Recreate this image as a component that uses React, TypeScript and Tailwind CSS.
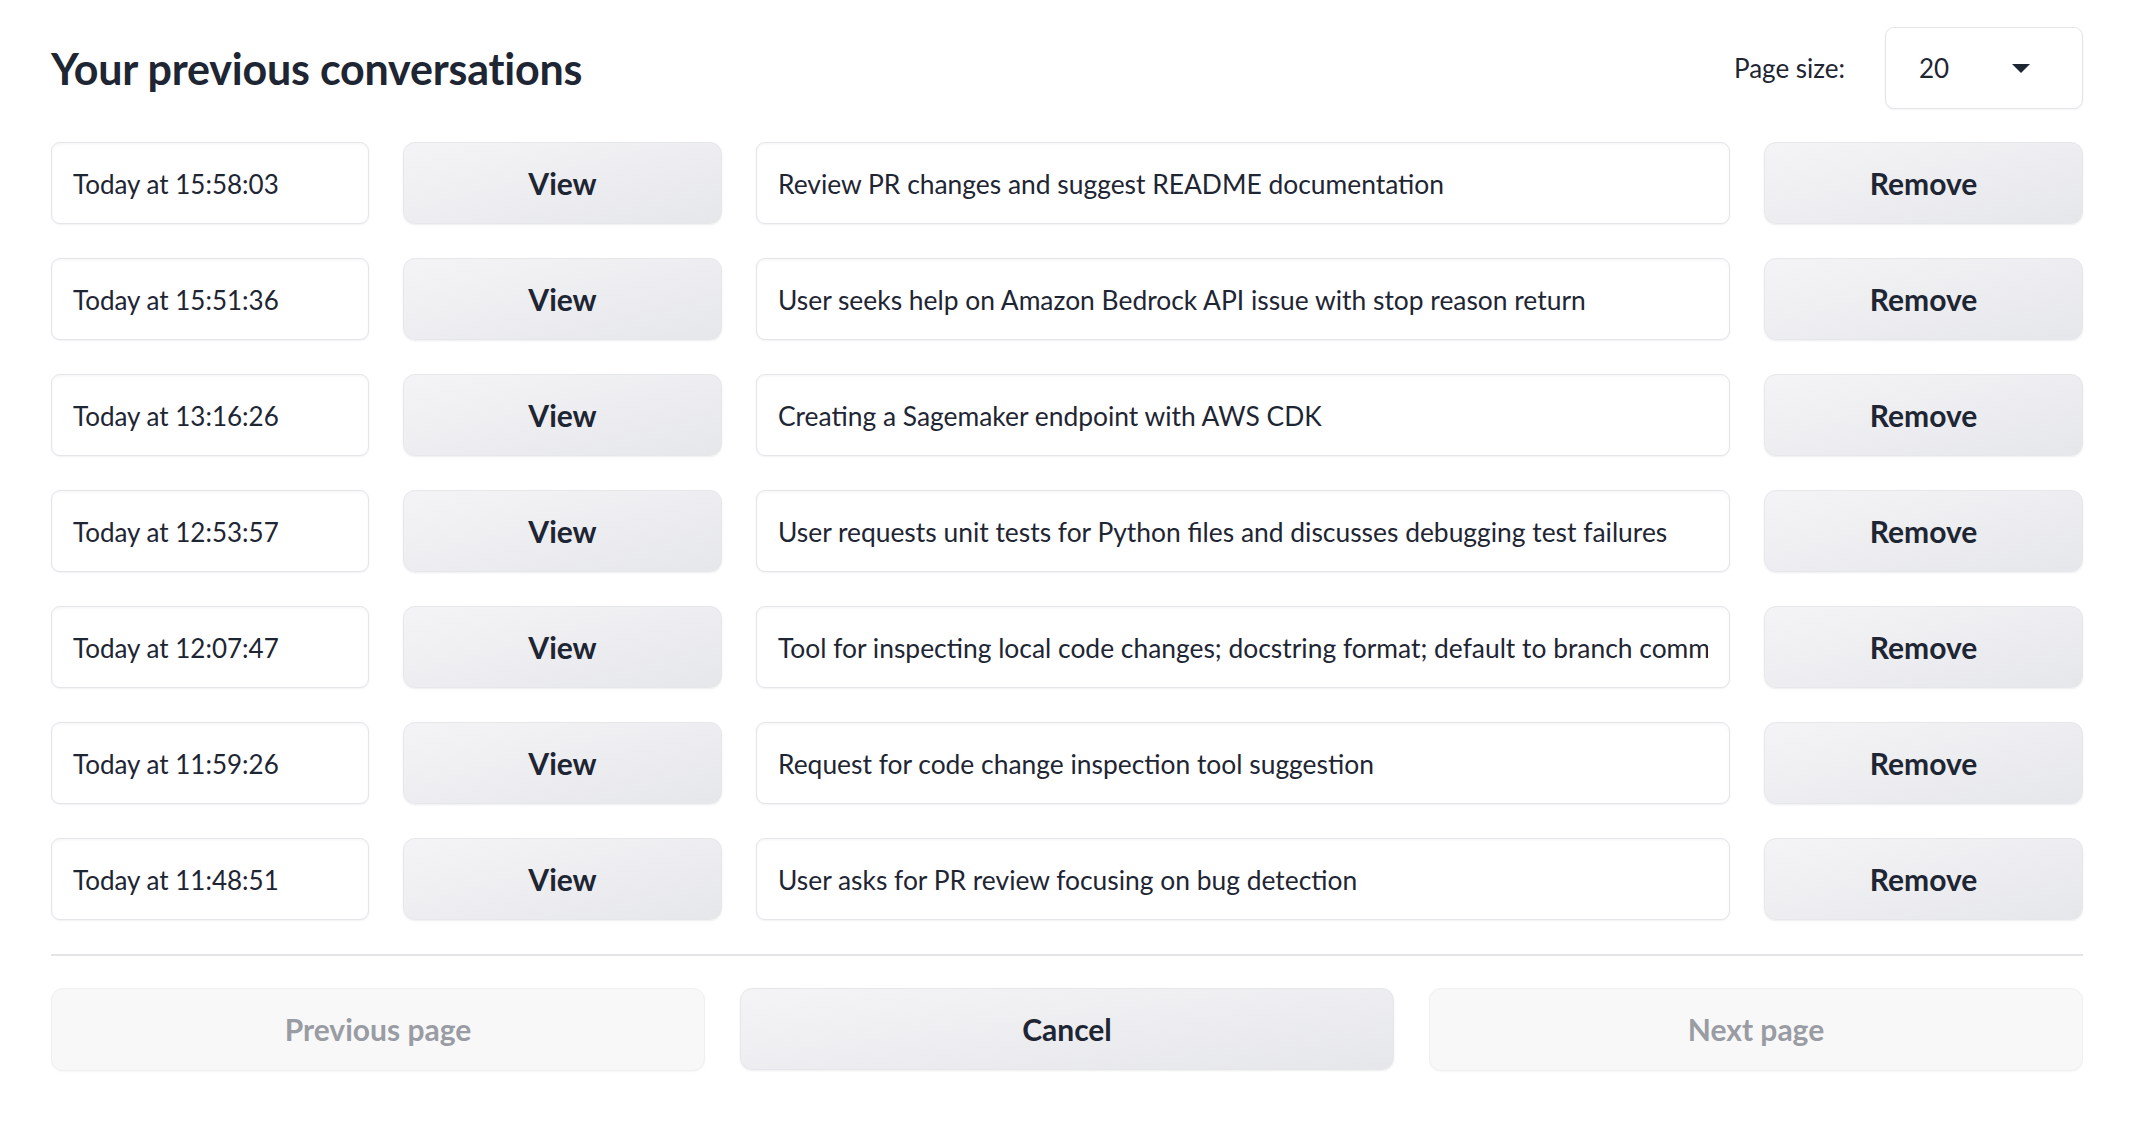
import React from "react";

const rows = [
  { time: "Today at 15:58:03", title: "Review PR changes and suggest README documentation" },
  { time: "Today at 15:51:36", title: "User seeks help on Amazon Bedrock API issue with stop reason return" },
  { time: "Today at 13:16:26", title: "Creating a Sagemaker endpoint with AWS CDK" },
  { time: "Today at 12:53:57", title: "User requests unit tests for Python files and discusses debugging test failures" },
  { time: "Today at 12:07:47", title: "Tool for inspecting local code changes; docstring format; default to branch commit comparison" },
  { time: "Today at 11:59:26", title: "Request for code change inspection tool suggestion" },
  { time: "Today at 11:48:51", title: "User asks for PR review focusing on bug detection" },
];

const font = { fontFamily: '"Lato", "Liberation Sans", sans-serif' };

function Field({ children, wide }: { children: React.ReactNode; wide?: boolean }) {
  return (
    <div className="min-w-0 h-[82px] rounded-[9px] border border-[#e4e5ea] bg-white px-[21px] flex items-center shadow-[0_1px_2px_rgba(16,24,40,0.06),inset_0_2px_3px_rgba(16,24,40,0.03)]">
      <div
        className={
          wide
            ? "min-w-0 w-full overflow-hidden whitespace-nowrap text-[26.4px] text-[#1e2533] leading-[34px] pt-[2px]"
            : "min-w-0 w-full overflow-hidden whitespace-nowrap text-[26px] text-[#1e2533] leading-[34px] pt-[2px]"
        }
      >
        {children}
      </div>
    </div>
  );
}

function Btn({ children }: { children: React.ReactNode }) {
  return (
    <button className="h-[82px] w-full rounded-[12px] border border-[#e6e7eb] bg-gradient-to-br from-[#f4f4f6] to-[#e6e7eb] shadow-[0_1px_2px_rgba(16,24,40,0.08)] text-[30px] font-bold text-[#1e2533] flex items-center justify-center">
      {children}
    </button>
  );
}

export default function App() {
  return (
    <div className="w-[2140px] h-[1136px] bg-white" style={font}>
      <div className="ml-[51px] w-[2032px] pt-[27px]">
        <div className="flex items-center justify-between h-[82px]">
          <h1 className="text-[43px] font-bold text-[#1e2533] leading-none tracking-[-0.2px]">Your previous conversations</h1>
          <div className="flex items-center gap-[40px]">
            <span className="text-[26px] text-[#1e2533]">Page size:</span>
            <div className="w-[198px] h-[82px] rounded-[9px] border border-[#e4e5ea] bg-white flex items-center justify-between pl-[33px] pr-[52px] shadow-[0_1px_2px_rgba(16,24,40,0.05)]">
              <span className="text-[26px] text-[#1e2533]">20</span>
              <svg width="18" height="9" viewBox="0 0 18 9">
                <path d="M0 0 L18 0 L9 9 Z" fill="#1e2533" />
              </svg>
            </div>
          </div>
        </div>

        <div className="mt-[33px] flex flex-col gap-[34px]">
          {rows.map((r) => (
            <div key={r.time} className="grid grid-cols-[318px_319px_minmax(0,1fr)_319px] gap-x-[34px] items-center">
              <Field>{r.time}</Field>
              <Btn>View</Btn>
              <Field wide>{r.title}</Field>
              <Btn>Remove</Btn>
            </div>
          ))}
        </div>

        <div className="mt-[34px] h-[2px] bg-[#e3e4e8]" />

        <div className="mt-[32px] grid grid-cols-3 gap-x-[35px]">
          <button className="h-[83px] rounded-[12px] border border-[#f0f0f2] bg-[#f8f8f9] text-[30px] font-bold text-[#9a9ca3] shadow-[0_1px_2px_rgba(16,24,40,0.04)]">
            Previous page
          </button>
          <Btn>Cancel</Btn>
          <button className="h-[83px] rounded-[12px] border border-[#f0f0f2] bg-[#f8f8f9] text-[30px] font-bold text-[#9a9ca3] shadow-[0_1px_2px_rgba(16,24,40,0.04)]">
            Next page
          </button>
        </div>
      </div>
    </div>
  );
}
